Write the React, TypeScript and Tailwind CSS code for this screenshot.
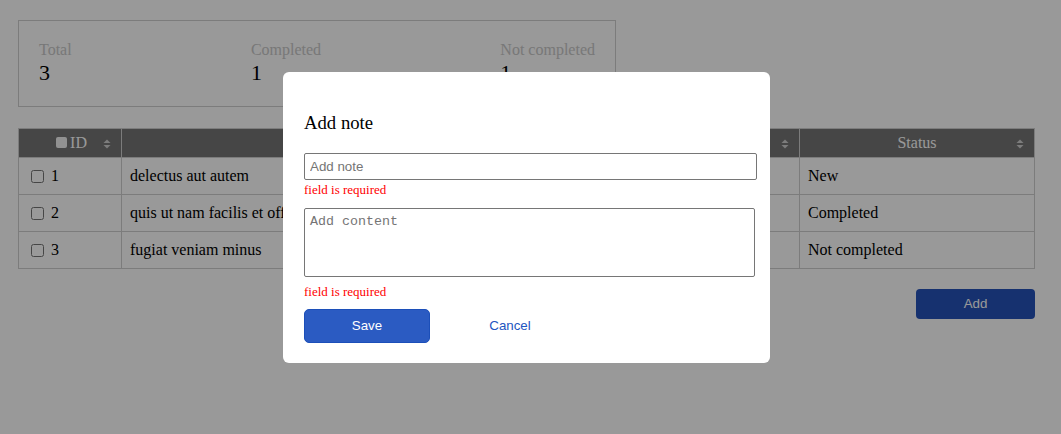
import React from 'react';

const notes = [
  { id: 1, title: 'delectus aut autem', status: 'New' },
  { id: 2, title: 'quis ut nam facilis et officia qui', status: 'Completed' },
  { id: 3, title: 'fugiat veniam minus', status: 'Not completed' },
];

function SortIcon() {
  return (
    <svg width="8" height="10" viewBox="0 0 8 10" className="inline-block">
      <path d="M4 0.5 L7.5 4 H0.5 Z" fill="#d0d0d0" />
      <path d="M4 9.5 L7.5 6 H0.5 Z" fill="#d0d0d0" />
    </svg>
  );
}

function Stat({ label, value }: { label: string; value: number }) {
  return (
    <div className="flex flex-col">
      <span className="text-[16px] leading-[18px] text-[#c8c8c8]">{label}</span>
      <span className="mt-[1px] text-[22px] leading-[26px] text-black">{value}</span>
    </div>
  );
}

export default function App() {
  return (
    <div className="relative min-h-[434px] bg-white font-['Liberation_Serif',serif] text-black">
      <div className="pl-[18px] pt-[20px] pr-[26px]">
        <div className="flex w-[598px] justify-between border border-[#cfcfcf] px-5 pt-[20px] pb-[20px]">
          <Stat label="Total" value={3} />
          <Stat label="Completed" value={1} />
          <Stat label="Not completed" value={1} />
        </div>

        <table className="mt-[21px] w-[1017px] table-fixed border-collapse text-[16px]">
          <colgroup>
            <col className="w-[103px]" />
            <col />
            <col className="w-[235px]" />
          </colgroup>
          <thead>
            <tr className="bg-[#757575] text-white">
              <th className="relative h-[29px] border border-[#cfcfcf] font-normal">
                <span className="inline-flex items-center gap-[3px] pl-[3px]">
                  <span className="inline-block h-[11px] w-[11px] rounded-[2px] bg-[#f2f2f2]" />
                  ID
                </span>
                <span className="absolute right-[10px] top-[10px] flex">
                  <SortIcon />
                </span>
              </th>
              <th className="relative h-[29px] border border-[#cfcfcf] font-normal">
                Title
                <span className="absolute right-[10px] top-[10px] flex">
                  <SortIcon />
                </span>
              </th>
              <th className="relative h-[29px] border border-[#cfcfcf] font-normal">
                Status
                <span className="absolute right-[10px] top-[10px] flex">
                  <SortIcon />
                </span>
              </th>
            </tr>
          </thead>
          <tbody>
            {notes.map((n) => (
              <tr key={n.id}>
                <td className="h-[37px] border border-[#cfcfcf] px-2">
                  <span className="flex items-center">
                    <input type="checkbox" className="ml-[4px] mr-[7px] h-[13px] w-[13px]" />
                    {n.id}
                  </span>
                </td>
                <td className="h-[37px] overflow-hidden whitespace-nowrap border border-[#cfcfcf] px-2">{n.title}</td>
                <td className="h-[37px] border border-[#cfcfcf] px-2">{n.status}</td>
              </tr>
            ))}
          </tbody>
        </table>

        <div className="mt-[20px] flex w-[1017px] justify-end">
          <button className="h-[30px] w-[119px] rounded-[4px] bg-[#2653b9] font-['Liberation_Sans',sans-serif] text-[13.33px] text-white">
            Add
          </button>
        </div>
      </div>

      <div className="fixed inset-0 flex items-center justify-center bg-black/40 pr-[8px]">
        <div className="w-[487px] rounded-[6px] bg-white px-[21px] pt-[40px] pb-[20px]">
          <h3 className="text-[18.72px] leading-[22px]">Add note</h3>
          <input
            placeholder="Add note"
            className="mt-[19px] block h-[27px] w-[453px] rounded-[2px] border border-[#767676] px-[5px] font-['Liberation_Sans',sans-serif] text-[13.33px] placeholder:text-[#757575] outline-none"
          />
          <div className="mt-[2px] text-[13px] leading-[16px] text-[#ff0000]">field is required</div>
          <div className="h-[10px]" />
          <textarea
            placeholder="Add content"
            className="block h-[69px] w-[451px] resize-none rounded-[2px] border border-[#767676] px-[5px] pt-[5px] pb-[4px] font-['Liberation_Mono',monospace] text-[13.33px] leading-[16px] placeholder:text-[#757575] outline-none"
          />
          <div className="mt-[7px] text-[13px] leading-[16px] text-[#ff0000]">field is required</div>
          <div className="mt-[9px] flex gap-[16px] font-['Liberation_Sans',sans-serif] text-[13.33px]">
            <button className="h-[34px] w-[126px] rounded-[5px] border border-[#1c4fb9] bg-[#2b5bc2] text-white">
              Save
            </button>
            <button className="h-[34px] w-[128px] text-[#2355c0]">Cancel</button>
          </div>
        </div>
      </div>
    </div>
  );
}
